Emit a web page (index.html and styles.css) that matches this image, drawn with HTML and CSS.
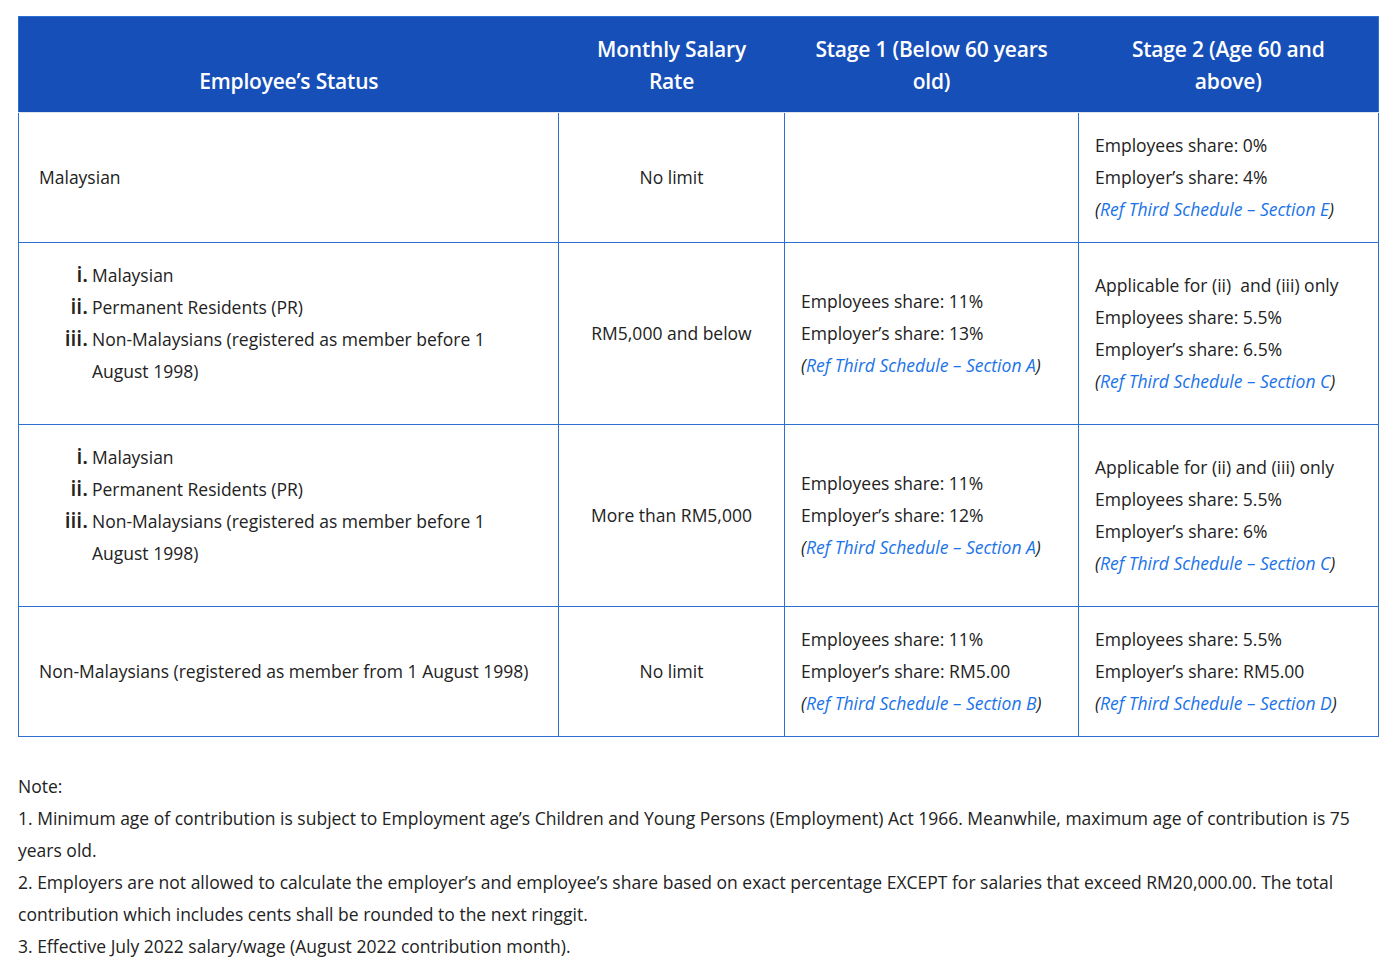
FILE: index.html
```html
<!DOCTYPE html>
<html lang="en">
<head>
<meta charset="utf-8">
<title>EPF Contribution Rates</title>
<link rel="stylesheet" href="styles.css">
</head>
<body>
<div class="page">
  <table class="rates">
    <colgroup>
      <col class="w1"><col class="w2"><col class="w3"><col class="w4">
    </colgroup>
    <thead>
      <tr>
        <th>Employee’s Status</th>
        <th>Monthly Salary Rate</th>
        <th>Stage 1 (Below 60 years old)</th>
        <th>Stage 2 (Age 60 and above)</th>
      </tr>
    </thead>
    <tbody>
      <tr>
        <td class="status">Malaysian</td>
        <td class="center">No limit</td>
        <td></td>
        <td>
          <p>Employees share: 0%</p>
          <p>Employer’s share: 4%</p>
          <p class="ref">(<a href="#">Ref Third Schedule – Section E</a>)</p>
        </td>
      </tr>
      <tr>
        <td class="status">
          <ol class="roman">
            <li>Malaysian</li>
            <li>Permanent Residents (PR)</li>
            <li>Non-Malaysians (registered as member before 1 August 1998)</li>
          </ol>
        </td>
        <td class="center">RM5,000 and below</td>
        <td>
          <p>Employees share: 11%</p>
          <p>Employer’s share: 13%</p>
          <p class="ref">(<a href="#">Ref Third Schedule – Section A</a>)</p>
        </td>
        <td>
          <p>Applicable for (ii)&nbsp; and (iii) only</p>
          <p>Employees share: 5.5%</p>
          <p>Employer’s share: 6.5%</p>
          <p class="ref">(<a href="#">Ref Third Schedule – Section C</a>)</p>
        </td>
      </tr>
      <tr>
        <td class="status">
          <ol class="roman">
            <li>Malaysian</li>
            <li>Permanent Residents (PR)</li>
            <li>Non-Malaysians (registered as member before 1 August 1998)</li>
          </ol>
        </td>
        <td class="center">More than RM5,000</td>
        <td>
          <p>Employees share: 11%</p>
          <p>Employer’s share: 12%</p>
          <p class="ref">(<a href="#">Ref Third Schedule – Section A</a>)</p>
        </td>
        <td>
          <p>Applicable for (ii) and (iii) only</p>
          <p>Employees share: 5.5%</p>
          <p>Employer’s share: 6%</p>
          <p class="ref">(<a href="#">Ref Third Schedule – Section C</a>)</p>
        </td>
      </tr>
      <tr>
        <td class="status">Non-Malaysians (registered as member from 1 August 1998)</td>
        <td class="center">No limit</td>
        <td>
          <p>Employees share: 11%</p>
          <p>Employer’s share: RM5.00</p>
          <p class="ref">(<a href="#">Ref Third Schedule – Section B</a>)</p>
        </td>
        <td>
          <p>Employees share: 5.5%</p>
          <p>Employer’s share: RM5.00</p>
          <p class="ref">(<a href="#">Ref Third Schedule – Section D</a>)</p>
        </td>
      </tr>
    </tbody>
  </table>

  <div class="notes">
    <p>Note:</p>
    <p>1. Minimum age of contribution is subject to Employment age’s Children and Young Persons (Employment) Act 1966. Meanwhile, maximum age of contribution is 75 years old.</p>
    <p>2. Employers are not allowed to calculate the employer’s and employee’s share based on exact percentage EXCEPT for salaries that exceed RM20,000.00. The total contribution which includes cents shall be rounded to the next ringgit.</p>
    <p>3. Effective July 2022 salary/wage (August 2022 contribution month).</p>
  </div>
</div>
</body>
</html>
```

FILE: styles.css
```css
html, body {
  margin: 0;
  padding: 0;
  background: #ffffff;
}

body {
  font-family: "Open Sans", "Noto Sans", sans-serif;
  color: #222222;
  font-size: 17.5px;
  line-height: 32px;
}

.page {
  padding: 16px 22px 20px 18px;
}

.rates {
  width: 1360px;
  border-collapse: collapse;
  table-layout: fixed;
  border: 1px solid #2b6fd1;
}

.w1 { width: 540px; }
.w2 { width: 226px; }
.w3 { width: 294px; }
.w4 { width: 300px; }

.rates th {
  background: #174fb8;
  color: #ffffff;
  font-size: 21px;
  font-weight: 600;
  line-height: 32px;
  letter-spacing: -0.2px;
  text-align: center;
  vertical-align: bottom;
  padding: 16px 24px 15px;
  border-bottom: 1px solid #dde4ee;
}

.rates td {
  border: 1px solid #2b6fd1;
  padding: 16px 16px 17px;
  vertical-align: middle;
  text-align: left;
}

.rates td.status {
  padding-left: 20px;
}

.rates td.center {
  text-align: center;
}

.rates p {
  margin: 0;
}

.ref {
  font-style: italic;
}

.ref a {
  color: #1a73e8;
  text-decoration: none;
}

.roman {
  list-style: none;
  counter-reset: item;
  margin: 0 0 20px 0;
  padding-left: 53px;
}

.roman li {
  counter-increment: item;
}

.roman li::before {
  content: counter(item, lower-roman) ".";
  display: inline-block;
  box-sizing: border-box;
  width: 53px;
  margin-left: -53px;
  padding-right: 4px;
  text-align: right;
  font-size: 21px;
  font-weight: 600;
  line-height: 20px;
}

.notes {
  margin-top: 33px;
}

.notes p {
  margin: 0;
}
```
